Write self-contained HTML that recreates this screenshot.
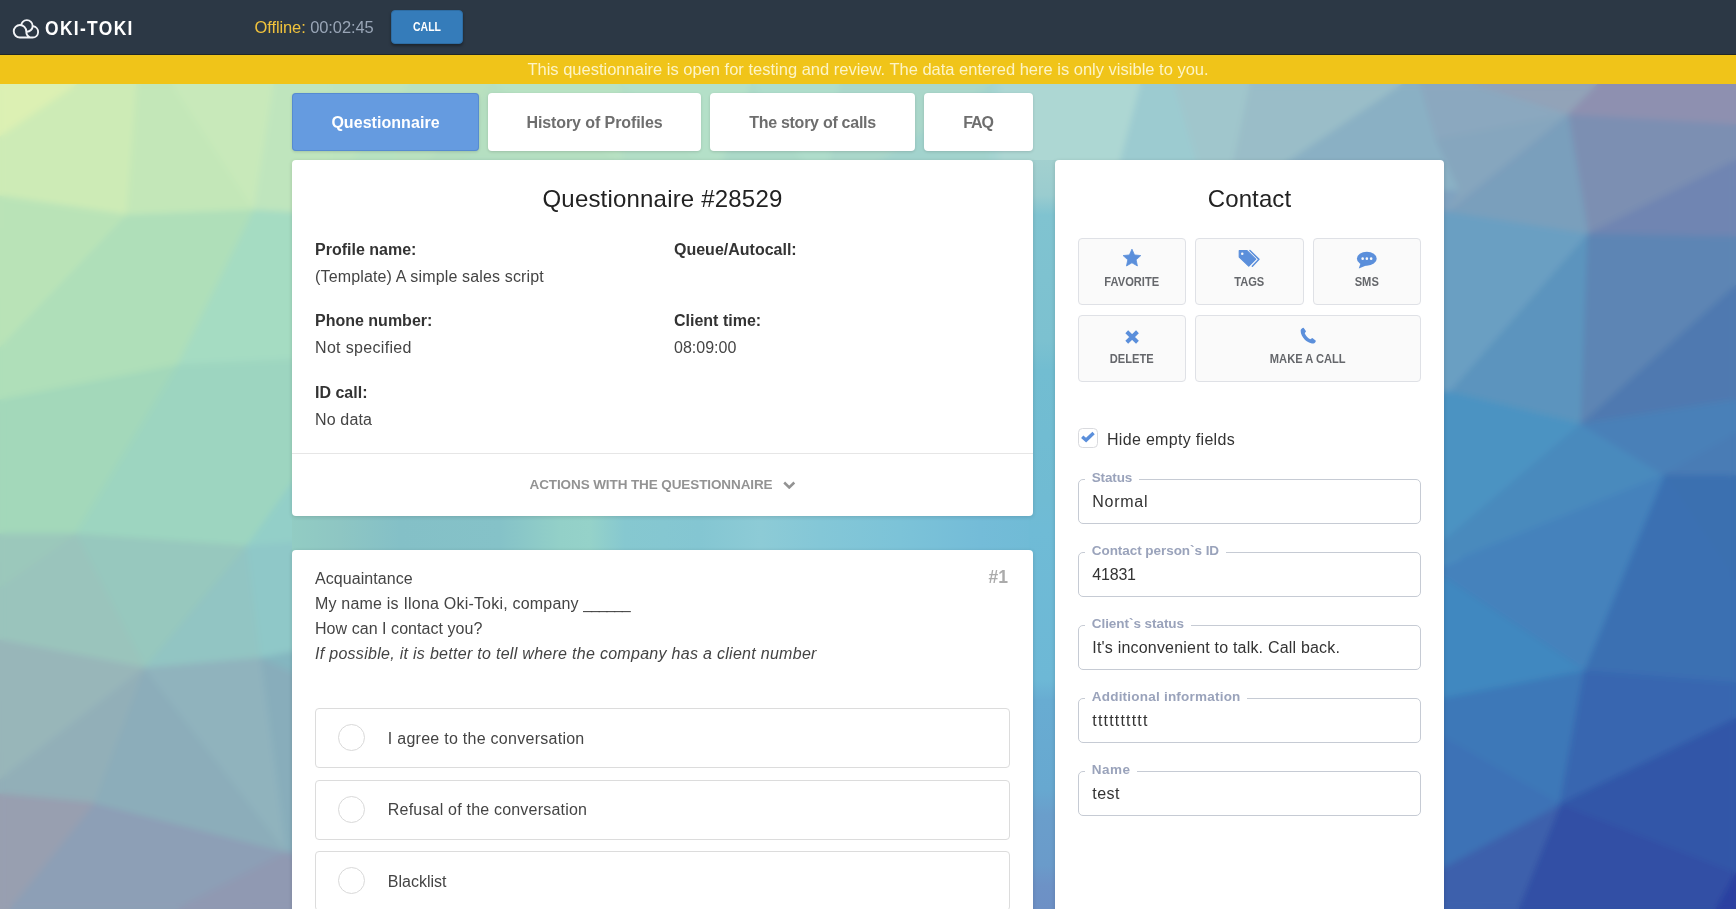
<!DOCTYPE html>
<html lang="en">
<head>
<meta charset="utf-8">
<title>Oki-Toki — Questionnaire #28529</title>
<style>
*{box-sizing:border-box;margin:0;padding:0}
html,body{width:1736px;height:909px;overflow:hidden}
body{font-family:"Liberation Sans",sans-serif;font-size:16px;color:#333;position:relative;background:#8fc5cc}
#bg{position:absolute;left:0;top:0;width:1736px;height:909px;z-index:0}
.abs{position:absolute}
#topbar,#notice,.tab,.card{will-change:transform}
#topbar{position:absolute;left:0;top:0;width:1736px;height:55px;background:#2c3845;z-index:2;box-shadow:inset 0 -1px 0 rgba(20,20,0,.45)}
#logo{position:absolute;left:10px;top:16px}
#brand{position:absolute;left:45px;top:16px;font-weight:bold;font-size:20px;line-height:24px;color:#fff;white-space:nowrap;letter-spacing:1.55px;transform:scaleX(.87);transform-origin:0 0}
#offline{position:absolute;left:254.5px;top:14.5px;font-size:16.5px;letter-spacing:-.1px;line-height:24px;white-space:nowrap;color:#99a5b6}
#offline b{font-weight:normal;color:#f0c23c}
#callbtn{position:absolute;left:391px;top:10px;width:72px;height:34px;background:#357cba;border:1px solid #2e6da4;border-radius:4px;color:#fff;font-weight:bold;font-size:12px;line-height:32px;text-align:center;box-shadow:0 2px 3px rgba(0,0,0,.35)}
#callbtn span{display:inline-block;transform:scaleX(.87)}
#notice{position:absolute;left:0;top:55px;width:1736px;height:29px;background:#f0c419;color:#fdf4c6;font-size:16.5px;line-height:29px;text-align:center;z-index:2;white-space:nowrap}
.tab{position:absolute;top:93px;height:58px;background:#fff;border-radius:4px;color:#6e6e6e;font-size:16px;font-weight:bold;line-height:60px;text-align:center;white-space:nowrap;box-shadow:0 1px 3px rgba(0,0,0,.14);z-index:1}
.tab.active{background:#659be0;color:#fff;box-shadow:inset 0 0 0 1px rgba(60,110,180,.35),0 1px 3px rgba(0,0,0,.14)}
.card{position:absolute;background:#fff;border-radius:4px;box-shadow:0 1px 4px rgba(0,0,0,.14);z-index:1}
h2{position:absolute;left:0;width:100%;text-align:center;font-weight:normal;font-size:24px;line-height:30px;color:#222;white-space:nowrap}
.lbl{position:absolute;font-weight:bold;font-size:16px;line-height:20px;color:#333;white-space:nowrap}
.val{position:absolute;font-size:16px;line-height:20px;color:#444;white-space:nowrap}

.hr{position:absolute;left:0;top:293px;width:100%;height:1px;background:#e6e6e6}
#actions{position:absolute;left:0;top:315px;width:100%;text-align:center;font-weight:bold;font-size:13.5px;line-height:20px;color:#939393;white-space:nowrap;letter-spacing:-.1px}
#actions svg{display:inline-block;vertical-align:0;margin-left:10.5px}
.q{position:absolute;left:23px;font-size:16px;line-height:25px;color:#444;white-space:nowrap}
#num{position:absolute;right:25px;top:16px;font-weight:bold;font-size:17.5px;line-height:22px;color:#ababab}
.opt{position:absolute;left:23.3px;width:694.5px;height:59.5px;border:1px solid #dcdcdc;border-radius:4px;background:#fff}
.opt i{position:absolute;left:22px;top:15px;width:27px;height:27px;border:1px solid #d9d9d9;border-radius:50%}
.opt span{position:absolute;left:71.5px;top:19.7px;font-size:16px;line-height:20px;color:#444;white-space:nowrap}
.cb{position:absolute;width:107.5px;height:66.3px;border:1px solid #dfe1e6;border-radius:4px;background:#fafafa;text-align:center}
.cb svg{position:absolute;left:0;top:0}
.cb span{position:absolute;left:0;width:100%;top:34.6px;font-size:12.5px;font-weight:bold;line-height:16px;color:#65676b;white-space:nowrap;transform:scaleX(.89)}
#chk{position:absolute;left:23.3px;top:268.3px;width:19.5px;height:19.4px;border:1px solid #d9dade;border-radius:4.5px;background:#fff}
#chk svg{position:absolute;left:0;top:0}
#chklbl{position:absolute;left:52px;top:270px;letter-spacing:.31px;font-size:16px;line-height:20px;color:#333;white-space:nowrap}
.fs{position:absolute;left:23.25px;width:342.5px;height:45px;border:1px solid #c6cbd4;border-radius:5px}
.fs b{position:absolute;left:6px;top:-10.8px;padding:0 6.5px;background:#fff;font-size:13.5px;line-height:18px;color:#9aa3bb;white-space:nowrap}
.fs span{position:absolute;left:13px;top:12px;font-size:16px;line-height:20px;color:#333;white-space:nowrap}
</style>
</head>
<body>
<svg id="bg" viewBox="0 0 1736 909" preserveAspectRatio="none">
<defs>
<linearGradient id="g1" x1="0" y1="0" x2="1" y2="1">
<stop offset="0" stop-color="#d6edb4"/><stop offset=".35" stop-color="#9fd6c4"/><stop offset=".65" stop-color="#69b2d0"/><stop offset="1" stop-color="#3050a8"/>
</linearGradient>
</defs>
<rect width="1736" height="909" fill="url(#g1)"/>
<!--BG--><filter id="bl" filterUnits="userSpaceOnUse" x="-50" y="0" width="1836" height="1000"><feGaussianBlur stdDeviation="3"/></filter><g id="bgp" stroke-width="1" stroke-linejoin="round"><polygon points="0,84 120,84 141,163" fill="#d1ecb7" stroke="#d1ecb7"/>
<polygon points="0,84 141,163 0,228" fill="#c8e7b5" stroke="#c8e7b5"/>
<polygon points="120,84 253,84 141,163" fill="#c9e8b9" stroke="#c9e8b9"/>
<polygon points="253,84 291,241 141,163" fill="#bee3bb" stroke="#bee3bb"/>
<polygon points="253,84 410,84 291,241" fill="#bde4be" stroke="#bde4be"/>
<polygon points="410,84 386,212 291,241" fill="#b7e2c0" stroke="#b7e2c0"/>
<polygon points="410,84 493,84 386,212" fill="#b9e1bf" stroke="#b9e1bf"/>
<polygon points="493,84 465,161 386,212" fill="#b5debf" stroke="#b5debf"/>
<polygon points="493,84 621,84 623,164" fill="#b8e2c3" stroke="#b8e2c3"/>
<polygon points="493,84 623,164 465,161" fill="#b5dfc1" stroke="#b5dfc1"/>
<polygon points="621,84 752,84 716,180" fill="#b4e0c8" stroke="#b4e0c8"/>
<polygon points="621,84 716,180 623,164" fill="#b2dec6" stroke="#b2dec6"/>
<polygon points="752,84 840,84 826,199" fill="#afddcb" stroke="#afddcb"/>
<polygon points="752,84 826,199 716,180" fill="#abd9c8" stroke="#abd9c8"/>
<polygon points="840,84 993,84 826,199" fill="#aad7ca" stroke="#aad7ca"/>
<polygon points="993,84 987,231 826,199" fill="#a2d3cd" stroke="#a2d3cd"/>
<polygon points="993,84 1128,84 987,231" fill="#a6d4d2" stroke="#a6d4d2"/>
<polygon points="1128,84 1118,214 987,231" fill="#9acdd1" stroke="#9acdd1"/>
<polygon points="1128,84 1266,84 1240,216" fill="#94c2cd" stroke="#94c2cd"/>
<polygon points="1128,84 1240,216 1118,214" fill="#90c3ce" stroke="#90c3ce"/>
<polygon points="1266,84 1328,84 1360,183" fill="#8fb6c6" stroke="#8fb6c6"/>
<polygon points="1266,84 1360,183 1240,216" fill="#88b6ca" stroke="#88b6ca"/>
<polygon points="1328,84 1470,84 1360,183" fill="#8baec3" stroke="#8baec3"/>
<polygon points="1470,84 1532,244 1360,183" fill="#7fa2c0" stroke="#7fa2c0"/>
<polygon points="1470,84 1575,84 1642,219" fill="#8299b7" stroke="#8299b7"/>
<polygon points="1470,84 1642,219 1532,244" fill="#7999b9" stroke="#7999b9"/>
<polygon points="1575,84 1736,84 1736,186" fill="#8391b2" stroke="#8391b2"/>
<polygon points="1575,84 1736,186 1642,219" fill="#7b94b5" stroke="#7b94b5"/>
<polygon points="0,228 141,163 0,297" fill="#bee4b8" stroke="#bee4b8"/>
<polygon points="141,163 105,283 0,297" fill="#b7e1b9" stroke="#b7e1b9"/>
<polygon points="141,163 291,241 105,283" fill="#b8e4be" stroke="#b8e4be"/>
<polygon points="291,241 272,311 105,283" fill="#aadcbf" stroke="#aadcbf"/>
<polygon points="291,241 386,212 403,310" fill="#a7d9c0" stroke="#a7d9c0"/>
<polygon points="291,241 403,310 272,311" fill="#a6dcc4" stroke="#a6dcc4"/>
<polygon points="386,212 465,161 537,349" fill="#a9dcc5" stroke="#a9dcc5"/>
<polygon points="386,212 537,349 403,310" fill="#a1d8c5" stroke="#a1d8c5"/>
<polygon points="465,161 623,164 575,295" fill="#acddc6" stroke="#acddc6"/>
<polygon points="465,161 575,295 537,349" fill="#a0d5c4" stroke="#a0d5c4"/>
<polygon points="623,164 716,180 781,317" fill="#a3d7c9" stroke="#a3d7c9"/>
<polygon points="623,164 781,317 575,295" fill="#9cd3c6" stroke="#9cd3c6"/>
<polygon points="716,180 826,199 781,317" fill="#9dd3c9" stroke="#9dd3c9"/>
<polygon points="826,199 911,311 781,317" fill="#92cecb" stroke="#92cecb"/>
<polygon points="826,199 987,231 954,331" fill="#93cece" stroke="#93cece"/>
<polygon points="826,199 954,331 911,311" fill="#8fcdcd" stroke="#8fcdcd"/>
<polygon points="987,231 1118,214 954,331" fill="#8ac8d0" stroke="#8ac8d0"/>
<polygon points="1118,214 1141,300 954,331" fill="#81c2d1" stroke="#81c2d1"/>
<polygon points="1118,214 1240,216 1141,300" fill="#82bdd0" stroke="#82bdd0"/>
<polygon points="1240,216 1203,306 1141,300" fill="#77b4cc" stroke="#77b4cc"/>
<polygon points="1240,216 1360,183 1405,342" fill="#72a8c5" stroke="#72a8c5"/>
<polygon points="1240,216 1405,342 1203,306" fill="#6ca9c9" stroke="#6ca9c9"/>
<polygon points="1360,183 1532,244 1454,298" fill="#729fc0" stroke="#729fc0"/>
<polygon points="1360,183 1454,298 1405,342" fill="#6c9fc1" stroke="#6c9fc1"/>
<polygon points="1532,244 1642,219 1576,282" fill="#6b91b8" stroke="#6b91b8"/>
<polygon points="1532,244 1576,282 1454,298" fill="#6a96bd" stroke="#6a96bd"/>
<polygon points="1642,219 1736,186 1576,282" fill="#6e8eb6" stroke="#6e8eb6"/>
<polygon points="1736,186 1736,345 1576,282" fill="#6487b5" stroke="#6487b5"/>
<polygon points="0,297 105,283 129,433" fill="#addebc" stroke="#addebc"/>
<polygon points="0,297 129,433 0,410" fill="#aadcbc" stroke="#aadcbc"/>
<polygon points="105,283 272,311 220,457" fill="#a6dbc1" stroke="#a6dbc1"/>
<polygon points="105,283 220,457 129,433" fill="#a4d9bf" stroke="#a4d9bf"/>
<polygon points="272,311 403,310 339,450" fill="#9ed6c3" stroke="#9ed6c3"/>
<polygon points="272,311 339,450 220,457" fill="#9dd5c3" stroke="#9dd5c3"/>
<polygon points="403,310 537,349 339,450" fill="#9ad3c4" stroke="#9ad3c4"/>
<polygon points="537,349 462,431 339,450" fill="#97d2c6" stroke="#97d2c6"/>
<polygon points="537,349 575,295 462,431" fill="#99d4c8" stroke="#99d4c8"/>
<polygon points="575,295 594,418 462,431" fill="#97d3c9" stroke="#97d3c9"/>
<polygon points="575,295 781,317 786,463" fill="#91cfcc" stroke="#91cfcc"/>
<polygon points="575,295 786,463 594,418" fill="#8fcdc8" stroke="#8fcdc8"/>
<polygon points="781,317 911,311 786,463" fill="#8bcdcf" stroke="#8bcdcf"/>
<polygon points="911,311 851,470 786,463" fill="#86c9d0" stroke="#86c9d0"/>
<polygon points="911,311 954,331 851,470" fill="#83c5ce" stroke="#83c5ce"/>
<polygon points="954,331 966,429 851,470" fill="#80c5d3" stroke="#80c5d3"/>
<polygon points="954,331 1141,300 966,429" fill="#7bc2d4" stroke="#7bc2d4"/>
<polygon points="1141,300 1148,450 966,429" fill="#6fb7d2" stroke="#6fb7d2"/>
<polygon points="1141,300 1203,306 1148,450" fill="#6eb2ce" stroke="#6eb2ce"/>
<polygon points="1203,306 1204,479 1148,450" fill="#66aed0" stroke="#66aed0"/>
<polygon points="1203,306 1405,342 1204,479" fill="#61a6ca" stroke="#61a6ca"/>
<polygon points="1405,342 1338,417 1204,479" fill="#599ec6" stroke="#599ec6"/>
<polygon points="1405,342 1454,298 1512,423" fill="#5e96bf" stroke="#5e96bf"/>
<polygon points="1405,342 1512,423 1338,417" fill="#5998c3" stroke="#5998c3"/>
<polygon points="1454,298 1576,282 1594,401" fill="#5f8eb9" stroke="#5f8eb9"/>
<polygon points="1454,298 1594,401 1512,423" fill="#5a90bd" stroke="#5a90bd"/>
<polygon points="1576,282 1736,345 1736,403" fill="#5982b5" stroke="#5982b5"/>
<polygon points="1576,282 1736,403 1594,401" fill="#5683b4" stroke="#5683b4"/>
<polygon points="0,410 129,433 101,564" fill="#9fd2be" stroke="#9fd2be"/>
<polygon points="0,410 101,564 0,562" fill="#9ac9ba" stroke="#9ac9ba"/>
<polygon points="129,433 220,457 237,551" fill="#99cfc1" stroke="#99cfc1"/>
<polygon points="129,433 237,551 101,564" fill="#98cdc1" stroke="#98cdc1"/>
<polygon points="220,457 339,450 237,551" fill="#97d0c4" stroke="#97d0c4"/>
<polygon points="339,450 413,554 237,551" fill="#94cfc8" stroke="#94cfc8"/>
<polygon points="339,450 462,431 503,587" fill="#94d0c9" stroke="#94d0c9"/>
<polygon points="339,450 503,587 413,554" fill="#8fcac5" stroke="#8fcac5"/>
<polygon points="462,431 594,418 592,526" fill="#92cec8" stroke="#92cec8"/>
<polygon points="462,431 592,526 503,587" fill="#8fcbc7" stroke="#8fcbc7"/>
<polygon points="594,418 786,463 592,526" fill="#8dcccb" stroke="#8dcccb"/>
<polygon points="786,463 780,582 592,526" fill="#89c8cd" stroke="#89c8cd"/>
<polygon points="786,463 851,470 780,582" fill="#85c7d0" stroke="#85c7d0"/>
<polygon points="851,470 846,529 780,582" fill="#83c5d0" stroke="#83c5d0"/>
<polygon points="851,470 966,429 1013,593" fill="#7cc2d5" stroke="#7cc2d5"/>
<polygon points="851,470 1013,593 846,529" fill="#7fc5d5" stroke="#7fc5d5"/>
<polygon points="966,429 1148,450 1089,594" fill="#6fb7d5" stroke="#6fb7d5"/>
<polygon points="966,429 1089,594 1013,593" fill="#73bbd6" stroke="#73bbd6"/>
<polygon points="1148,450 1204,479 1089,594" fill="#64abd0" stroke="#64abd0"/>
<polygon points="1204,479 1274,564 1089,594" fill="#5da2cc" stroke="#5da2cc"/>
<polygon points="1204,479 1338,417 1274,564" fill="#589eca" stroke="#589eca"/>
<polygon points="1338,417 1357,522 1274,564" fill="#5399c7" stroke="#5399c7"/>
<polygon points="1338,417 1512,423 1447,595" fill="#5094c4" stroke="#5094c4"/>
<polygon points="1338,417 1447,595 1357,522" fill="#4f94c4" stroke="#4f94c4"/>
<polygon points="1512,423 1594,401 1589,573" fill="#4c86bb" stroke="#4c86bb"/>
<polygon points="1512,423 1589,573 1447,595" fill="#4688be" stroke="#4688be"/>
<polygon points="1594,401 1736,403 1736,535" fill="#4a7ab3" stroke="#4a7ab3"/>
<polygon points="1594,401 1736,535 1589,573" fill="#437ab4" stroke="#437ab4"/>
<polygon points="0,562 101,564 0,701" fill="#97bfba" stroke="#97bfba"/>
<polygon points="101,564 133,656 0,701" fill="#97bdbd" stroke="#97bdbd"/>
<polygon points="101,564 237,551 133,656" fill="#92c1be" stroke="#92c1be"/>
<polygon points="237,551 219,692 133,656" fill="#90bbbe" stroke="#90bbbe"/>
<polygon points="237,551 413,554 334,650" fill="#8dc3c3" stroke="#8dc3c3"/>
<polygon points="237,551 334,650 219,692" fill="#8ebdc2" stroke="#8ebdc2"/>
<polygon points="413,554 503,587 334,650" fill="#8bc1c5" stroke="#8bc1c5"/>
<polygon points="503,587 501,703 334,650" fill="#86b8c3" stroke="#86b8c3"/>
<polygon points="503,587 592,526 630,655" fill="#89c2c9" stroke="#89c2c9"/>
<polygon points="503,587 630,655 501,703" fill="#86bbc9" stroke="#86bbc9"/>
<polygon points="592,526 780,582 781,648" fill="#84c1ce" stroke="#84c1ce"/>
<polygon points="592,526 781,648 630,655" fill="#82bbc8" stroke="#82bbc8"/>
<polygon points="780,582 846,529 825,654" fill="#7ebdce" stroke="#7ebdce"/>
<polygon points="780,582 825,654 781,648" fill="#7cbace" stroke="#7cbace"/>
<polygon points="846,529 1013,593 987,636" fill="#75b8d1" stroke="#75b8d1"/>
<polygon points="846,529 987,636 825,654" fill="#79bad1" stroke="#79bad1"/>
<polygon points="1013,593 1089,594 1087,662" fill="#6ab0d2" stroke="#6ab0d2"/>
<polygon points="1013,593 1087,662 987,636" fill="#6bafcf" stroke="#6bafcf"/>
<polygon points="1089,594 1274,564 1087,662" fill="#5fa1cb" stroke="#5fa1cb"/>
<polygon points="1274,564 1246,642 1087,662" fill="#5899c7" stroke="#5899c7"/>
<polygon points="1274,564 1357,522 1246,642" fill="#5094c5" stroke="#5094c5"/>
<polygon points="1357,522 1352,706 1246,642" fill="#4c8dc2" stroke="#4c8dc2"/>
<polygon points="1357,522 1447,595 1531,687" fill="#4589c0" stroke="#4589c0"/>
<polygon points="1357,522 1531,687 1352,706" fill="#4486be" stroke="#4486be"/>
<polygon points="1447,595 1589,573 1629,680" fill="#3f7dba" stroke="#3f7dba"/>
<polygon points="1447,595 1629,680 1531,687" fill="#3e7bba" stroke="#3e7bba"/>
<polygon points="1589,573 1736,535 1629,680" fill="#3c75b6" stroke="#3c75b6"/>
<polygon points="1736,535 1736,643 1629,680" fill="#396eb2" stroke="#396eb2"/>
<polygon points="0,701 133,656 0,752" fill="#94b2b8" stroke="#94b2b8"/>
<polygon points="133,656 81,826 0,752" fill="#95afb9" stroke="#95afb9"/>
<polygon points="133,656 219,692 81,826" fill="#91b1bc" stroke="#91b1bc"/>
<polygon points="219,692 266,830 81,826" fill="#8fa7b7" stroke="#8fa7b7"/>
<polygon points="219,692 334,650 329,803" fill="#89b0bf" stroke="#89b0bf"/>
<polygon points="219,692 329,803 266,830" fill="#8aa6b8" stroke="#8aa6b8"/>
<polygon points="334,650 501,703 329,803" fill="#86b0c2" stroke="#86b0c2"/>
<polygon points="501,703 494,811 329,803" fill="#83a6bd" stroke="#83a6bd"/>
<polygon points="501,703 630,655 604,834" fill="#7faec7" stroke="#7faec7"/>
<polygon points="501,703 604,834 494,811" fill="#80a5c0" stroke="#80a5c0"/>
<polygon points="630,655 781,648 706,795" fill="#7ab1cb" stroke="#7ab1cb"/>
<polygon points="630,655 706,795 604,834" fill="#7ba8c5" stroke="#7ba8c5"/>
<polygon points="781,648 825,654 706,795" fill="#75adc9" stroke="#75adc9"/>
<polygon points="825,654 889,825 706,795" fill="#74a6c8" stroke="#74a6c8"/>
<polygon points="825,654 987,636 889,825" fill="#6eaaca" stroke="#6eaaca"/>
<polygon points="987,636 1013,808 889,825" fill="#6ba3ca" stroke="#6ba3ca"/>
<polygon points="987,636 1087,662 1013,808" fill="#69add1" stroke="#69add1"/>
<polygon points="1087,662 1142,826 1013,808" fill="#659ecd" stroke="#659ecd"/>
<polygon points="1087,662 1246,642 1227,807" fill="#5694c6" stroke="#5694c6"/>
<polygon points="1087,662 1227,807 1142,826" fill="#5b91c6" stroke="#5b91c6"/>
<polygon points="1246,642 1352,706 1227,807" fill="#4d89c1" stroke="#4d89c1"/>
<polygon points="1352,706 1400,823 1227,807" fill="#477ab9" stroke="#477ab9"/>
<polygon points="1352,706 1531,687 1481,816" fill="#3e78b8" stroke="#3e78b8"/>
<polygon points="1352,706 1481,816 1400,823" fill="#4174b5" stroke="#4174b5"/>
<polygon points="1531,687 1629,680 1481,816" fill="#3b72b6" stroke="#3b72b6"/>
<polygon points="1629,680 1644,797 1481,816" fill="#3869b2" stroke="#3869b2"/>
<polygon points="1629,680 1736,643 1736,802" fill="#3466af" stroke="#3466af"/>
<polygon points="1629,680 1736,802 1644,797" fill="#3460ad" stroke="#3460ad"/>
<polygon points="0,752 81,826 0,909" fill="#99a7b7" stroke="#99a7b7"/>
<polygon points="81,826 113,909 0,909" fill="#98a0b5" stroke="#98a0b5"/>
<polygon points="81,826 266,830 255,909" fill="#8f9db3" stroke="#8f9db3"/>
<polygon points="81,826 255,909 113,909" fill="#959eb5" stroke="#959eb5"/>
<polygon points="266,830 329,803 382,909" fill="#8c9fb8" stroke="#8c9fb8"/>
<polygon points="266,830 382,909 255,909" fill="#8c9ab3" stroke="#8c9ab3"/>
<polygon points="329,803 494,811 459,909" fill="#869fba" stroke="#869fba"/>
<polygon points="329,803 459,909 382,909" fill="#889bb7" stroke="#889bb7"/>
<polygon points="494,811 604,834 459,909" fill="#819cba" stroke="#819cba"/>
<polygon points="604,834 632,909 459,909" fill="#819abd" stroke="#819abd"/>
<polygon points="604,834 706,795 632,909" fill="#7b9cbe" stroke="#7b9cbe"/>
<polygon points="706,795 788,909 632,909" fill="#7899c0" stroke="#7899c0"/>
<polygon points="706,795 889,825 788,909" fill="#749bc3" stroke="#749bc3"/>
<polygon points="889,825 902,909 788,909" fill="#6f94c1" stroke="#6f94c1"/>
<polygon points="889,825 1013,808 1012,909" fill="#6c98c8" stroke="#6c98c8"/>
<polygon points="889,825 1012,909 902,909" fill="#6c92c3" stroke="#6c92c3"/>
<polygon points="1013,808 1142,826 1012,909" fill="#6896ca" stroke="#6896ca"/>
<polygon points="1142,826 1106,909 1012,909" fill="#648cc6" stroke="#648cc6"/>
<polygon points="1142,826 1227,807 1106,909" fill="#5a85c0" stroke="#5a85c0"/>
<polygon points="1227,807 1261,909 1106,909" fill="#557cbc" stroke="#557cbc"/>
<polygon points="1227,807 1400,823 1261,909" fill="#4a74b8" stroke="#4a74b8"/>
<polygon points="1400,823 1371,909 1261,909" fill="#476eb6" stroke="#476eb6"/>
<polygon points="1400,823 1481,816 1371,909" fill="#416bb1" stroke="#416bb1"/>
<polygon points="1481,816 1483,909 1371,909" fill="#4067b1" stroke="#4067b1"/>
<polygon points="1481,816 1644,797 1483,909" fill="#3a62af" stroke="#3a62af"/>
<polygon points="1644,797 1642,909 1483,909" fill="#3758aa" stroke="#3758aa"/>
<polygon points="1644,797 1736,802 1736,909" fill="#3151a8" stroke="#3151a8"/>
<polygon points="1644,797 1736,909 1642,909" fill="#314ea7" stroke="#314ea7"/>
<polygon points="0,84 78,84 0,137" fill="#dcf0b3" stroke="#dcf0b3"/>
<polygon points="0,137 78,84 137,84 127,215 0,196" fill="#cdebb6" stroke="#cdebb6"/>
<polygon points="137,84 172,84 254,210 127,215" fill="#c3e7b8" stroke="#c3e7b8"/>
<polygon points="172,84 274,84 254,210" fill="#c8e9ba" stroke="#c8e9ba"/>
<polygon points="274,84 330,84 330,215 254,210" fill="#bfe5bd" stroke="#bfe5bd"/>
<polygon points="0,196 127,215 0,348" fill="#b9e3b7" stroke="#b9e3b7"/>
<polygon points="0,348 127,215 254,210 178,365 0,400" fill="#afdfb9" stroke="#afdfb9"/>
<polygon points="254,210 330,215 330,358 178,365" fill="#a5dcc2" stroke="#a5dcc2"/>
<polygon points="0,400 178,365 76,534 0,534" fill="#a3d8ba" stroke="#a3d8ba"/>
<polygon points="178,365 330,358 330,430 247,546 76,534" fill="#9dd5c0" stroke="#9dd5c0"/>
<polygon points="247,546 330,430 330,540" fill="#93cfc8" stroke="#93cfc8"/>
<polygon points="76,534 247,546 145,668" fill="#97c8be" stroke="#97c8be"/>
<polygon points="0,534 76,534 0,588" fill="#9bc8bb" stroke="#9bc8bb"/>
<polygon points="0,588 76,534 145,668 0,640" fill="#9ac4bc" stroke="#9ac4bc"/>
<polygon points="0,640 145,668 0,780" fill="#98b6b9" stroke="#98b6b9"/>
<polygon points="247,546 261,658 145,668" fill="#92c5c3" stroke="#92c5c3"/>
<polygon points="247,546 330,540 330,645 261,658" fill="#8fc8c8" stroke="#8fc8c8"/>
<polygon points="261,658 330,645 330,690" fill="#84b6c0" stroke="#84b6c0"/>
<polygon points="0,780 145,668 95,803 0,794" fill="#92afb8" stroke="#92afb8"/>
<polygon points="0,794 95,803 10,909 0,909" fill="#989fb0" stroke="#989fb0"/>
<polygon points="95,803 287,852 178,909 10,909" fill="#8d9fb6" stroke="#8d9fb6"/>
<polygon points="287,852 330,909 178,909" fill="#9099b2" stroke="#9099b2"/>
<polygon points="145,668 287,852 95,803" fill="#8cadba" stroke="#8cadba"/>
<polygon points="145,668 261,658 287,852" fill="#90b3bd" stroke="#90b3bd"/>
<polygon points="261,658 330,690 330,860 287,852" fill="#88adbb" stroke="#88adbb"/>
<polygon points="287,852 330,860 330,909" fill="#8c9ab4" stroke="#8c9ab4"/>
<polygon points="1000,84 1141,84 1113,190 1000,190" fill="#add7d3" stroke="#add7d3"/>
<polygon points="1141,84 1175,84 1206,190 1113,190" fill="#9ccbd0" stroke="#9ccbd0"/>
<polygon points="1175,84 1250,84 1228,190 1206,190" fill="#a0c6cc" stroke="#a0c6cc"/>
<polygon points="1250,84 1403,84 1246,190 1228,190" fill="#9abdc8" stroke="#9abdc8"/>
<polygon points="1403,84 1420,84 1460,190 1246,190" fill="#8ab0c4" stroke="#8ab0c4"/>
<polygon points="1470,84 1598,84 1568,115" fill="#92a3b8" stroke="#92a3b8"/>
<polygon points="1420,84 1470,84 1568,115 1436,140" fill="#8ba8bf" stroke="#8ba8bf"/>
<polygon points="1436,140 1568,115 1448,212 1460,190" fill="#86a6be" stroke="#86a6be"/>
<polygon points="1598,84 1736,84 1736,125 1568,115" fill="#8e90b0" stroke="#8e90b0"/>
<polygon points="1568,115 1736,125 1736,160 1588,234" fill="#7b8fb2" stroke="#7b8fb2"/>
<polygon points="1588,234 1736,160 1736,237" fill="#7085b2" stroke="#7085b2"/>
<polygon points="1448,212 1568,115 1588,234" fill="#7a9fbc" stroke="#7a9fbc"/>
<polygon points="1400,205 1448,212 1588,234 1450,392 1400,395" fill="#6b9fc2" stroke="#6b9fc2"/>
<polygon points="1450,392 1588,234 1581,424" fill="#5c94be" stroke="#5c94be"/>
<polygon points="1588,234 1736,237 1736,285 1581,424" fill="#5d85b4" stroke="#5d85b4"/>
<polygon points="1581,424 1736,285 1736,400" fill="#5079b0" stroke="#5079b0"/>
<polygon points="1400,392 1450,392 1581,424 1446,539 1400,545" fill="#4c93c2" stroke="#4c93c2"/>
<polygon points="1581,424 1664,475 1446,562 1400,565 1400,545 1446,539" fill="#4a8abd" stroke="#4a8abd"/>
<polygon points="1581,424 1736,400 1736,433 1664,475" fill="#4a80b8" stroke="#4a80b8"/>
<polygon points="1664,475 1736,433 1736,476" fill="#4a7cb5" stroke="#4a7cb5"/>
<polygon points="1664,475 1736,476 1736,582" fill="#3b6fb0" stroke="#3b6fb0"/>
<polygon points="1664,475 1736,582 1736,683 1584,671" fill="#3a6fb2" stroke="#3a6fb2"/>
<polygon points="1400,565 1446,565 1664,475 1584,671 1446,579" fill="#4482bc" stroke="#4482bc"/>
<polygon points="1400,575 1446,579 1584,671 1446,698 1400,700" fill="#3f88c0" stroke="#3f88c0"/>
<polygon points="1400,700 1446,698 1584,671 1560,804 1446,738 1400,740" fill="#3c78b8" stroke="#3c78b8"/>
<polygon points="1584,671 1736,683 1736,718 1560,804" fill="#3766b0" stroke="#3766b0"/>
<polygon points="1560,804 1736,718 1736,873" fill="#3157a8" stroke="#3157a8"/>
<polygon points="1560,804 1736,873 1716,909 1518,909" fill="#3050a5" stroke="#3050a5"/>
<polygon points="1736,873 1736,909 1716,909" fill="#2c40a0" stroke="#2c40a0"/>
<polygon points="1560,804 1518,909 1400,909 1400,870 1446,866" fill="#3c60ac" stroke="#3c60ac"/>
<polygon points="1560,804 1446,866 1400,870 1400,740 1446,738" fill="#3c72b6" stroke="#3c72b6"/></g><use href="#bgp" filter="url(#bl)"/><linearGradient id="gh" gradientUnits="userSpaceOnUse" x1="292" y1="0" x2="1033" y2="0"><stop offset="0.0000" stop-color="#92ccc3"/><stop offset="0.0648" stop-color="#8ec6c3"/><stop offset="0.1457" stop-color="#84c0c7"/><stop offset="0.2807" stop-color="#85c2c8"/><stop offset="0.3617" stop-color="#93d0c8"/><stop offset="0.4022" stop-color="#95d2c9"/><stop offset="0.4494" stop-color="#86c8d0"/><stop offset="0.5506" stop-color="#84c6d2"/><stop offset="0.6316" stop-color="#8dcbd6"/><stop offset="0.7126" stop-color="#84c7d7"/><stop offset="0.8205" stop-color="#7cc3d8"/><stop offset="0.9285" stop-color="#74bcd8"/><stop offset="1.0000" stop-color="#70bbd6"/></linearGradient><linearGradient id="gv" gradientUnits="userSpaceOnUse" x1="0" y1="160" x2="0" y2="909"><stop offset="0.0000" stop-color="#a2d0cf"/><stop offset="0.0467" stop-color="#9acccf"/><stop offset="0.0734" stop-color="#80c3d0"/><stop offset="0.2403" stop-color="#7cc1d0"/><stop offset="0.2804" stop-color="#72bdd1"/><stop offset="0.4539" stop-color="#70bbd3"/><stop offset="0.4940" stop-color="#6fbbd6"/><stop offset="0.6943" stop-color="#6db8d6"/><stop offset="0.7210" stop-color="#68acd2"/><stop offset="0.8411" stop-color="#67a8d0"/><stop offset="0.8745" stop-color="#6a9ecb"/><stop offset="0.9413" stop-color="#6a9bca"/><stop offset="0.9680" stop-color="#6d92c6"/><stop offset="1.0000" stop-color="#6d90c5"/></linearGradient><rect x="292" y="512" width="741" height="42" fill="url(#gh)"/><rect x="1029" y="160" width="30" height="749" fill="url(#gv)"/><!--/BG-->
</svg>

<div id="topbar">
<svg id="logo" width="32" height="26" viewBox="10 16 32 26"><g fill="none" stroke="#f2f4f7" stroke-width="1.9" stroke-linecap="round" stroke-linejoin="round"><circle cx="26.85" cy="25.9" r="5.8"/><circle cx="20" cy="31.3" r="6.3" fill="#2c3845" stroke="none"/><path d="M33.2 26.3 A5.65 5.65 0 0 1 32.6 37.55 H20 A6.25 6.25 0 1 1 26.25 31.3 Q26.3 35.6 29.8 37.4"/></g></svg>
<div id="brand">OKI-TOKI</div>
<div id="offline"><b>Offline:</b> 00:02:45</div>
<div id="callbtn"><span>CALL</span></div>
</div>
<div id="notice">This questionnaire is open for testing and review. The data entered here is only visible to you.</div>

<div class="tab active" style="left:292px;width:187px;letter-spacing:.05px">Questionnaire</div>
<div class="tab" style="left:488px;width:213px;letter-spacing:-.09px">History of Profiles</div>
<div class="tab" style="left:710px;width:205px;letter-spacing:-.27px">The story of calls</div>
<div class="tab" style="left:924px;width:109px;letter-spacing:-1.1px;text-indent:-1px">FAQ</div>

<div class="card" id="qcard" style="left:292px;top:160px;width:741px;height:356px">
<h2 style="top:24px;letter-spacing:.19px">Questionnaire #28529</h2>
<div class="lbl" style="left:23px;top:80px">Profile name:</div>
<div class="val" style="left:23px;top:107px;letter-spacing:.15px">(Template) A simple sales script</div>
<div class="lbl" style="left:382px;top:80px">Queue/Autocall:</div>
<div class="lbl" style="left:23px;top:151px">Phone number:</div>
<div class="val" style="left:23px;top:178px;letter-spacing:.33px">Not specified</div>
<div class="lbl" style="left:382px;top:151px">Client time:</div>
<div class="val" style="left:382px;top:178px">08:09:00</div>
<div class="lbl" style="left:23px;top:223px">ID call:</div>
<div class="val" style="left:23px;top:250px;letter-spacing:.15px">No data</div>
<div class="hr"></div>
<div id="actions">ACTIONS WITH THE QUESTIONNAIRE<svg width="12.5" height="8.5" viewBox="0 0 12.5 8.5"><path d="M1.2 1.5 L6.25 6.5 L11.3 1.5" fill="none" stroke="#939393" stroke-width="2.5"/></svg></div>
</div>

<div class="card" id="scard" style="left:292px;top:550px;width:741px;height:380px">
<div class="q" style="top:16px;letter-spacing:.07px">Acquaintance</div>
<div class="q" style="top:41px"><span id="mn" style="letter-spacing:.2px">My name is Ilona Oki-Toki, company</span> <span id="us" style="letter-spacing:-1.2px">______</span></div>
<div class="q" style="top:66px;letter-spacing:.05px">How can I contact you?</div>
<div class="q" style="top:91px;letter-spacing:.29px"><em>If possible, it is better to tell where the company has a client number</em></div>
<div id="num">#1</div>
<div class="opt" style="top:158.2px"><i></i><span style="letter-spacing:.27px">I agree to the conversation</span></div>
<div class="opt" style="top:229.5px;height:60.3px"><i></i><span style="letter-spacing:.2px">Refusal of the conversation</span></div>
<div class="opt" style="top:301.2px"><i></i><span>Blacklist</span></div>
</div>

<div class="card" id="ccard" style="left:1055px;top:160px;width:389px;height:780px">
<h2 style="top:24px;letter-spacing:.1px">Contact</h2>
<div class="cb" style="left:23.25px;top:78.25px"><svg width="110" height="40" viewBox="0 0 110 40"><path d="M52.95 10.15 L55.52 15.91 L61.79 16.58 L57.11 20.80 L58.42 26.97 L52.95 23.82 L47.48 26.97 L48.79 20.80 L44.11 16.58 L50.38 15.91Z" fill="#5b8fdb" stroke="#5b8fdb" stroke-width=".8" stroke-linejoin="round"/></svg><span>FAVORITE</span></div>
<div class="cb" style="left:140.25px;top:78.25px;width:108.5px"><svg width="110" height="40" viewBox="0 0 110 40"><path d="M43.25 11.65 L51.05 11.65 L59.75 20.15 L52.75 27.15 L43.25 17.95 Z" fill="#5b8fdb" stroke="#5b8fdb" stroke-width="1.2" stroke-linejoin="round"/><path d="M53.95 11.55 L62.95 20.35 L56.35 27.25" fill="none" stroke="#5b8fdb" stroke-width="1.5" stroke-linejoin="round" stroke-linecap="round"/><circle cx="46.25" cy="14.65" r="1.25" fill="#fafafa"/></svg><span>TAGS</span></div>
<div class="cb" style="left:258.25px;top:78.25px"><svg width="110" height="40" viewBox="0 0 110 40"><ellipse cx="52.80" cy="19.70" rx="9.9" ry="6.95" fill="#5b8fdb"/><path d="M46.75 23.75 L44.75 29.55 L52.75 26.25 Z" fill="#5b8fdb"/><circle cx="48.65" cy="19.65" r="1.3" fill="#fafafa"/><circle cx="52.85" cy="19.65" r="1.3" fill="#fafafa"/><circle cx="57.15" cy="19.65" r="1.3" fill="#fafafa"/></svg><span>SMS</span></div>
<div class="cb" style="left:23.25px;top:154.5px;height:67px"><svg width="110" height="40" viewBox="0 0 110 40"><path d="M47.75 15.80 L58.45 26.20 M58.45 15.80 L47.75 26.20" stroke="#5b8fdb" stroke-width="4" fill="none"/></svg><span style="top:35.6px">DELETE</span></div>
<div class="cb" style="left:140.25px;top:154.5px;width:225.5px;height:67px"><svg width="226" height="40" viewBox="0 0 226 40"><path d="M107.55 11.80 C106.25 12.10, 104.75 13.10, 104.65 14.50 C104.45 21.00, 111.25 27.50, 117.35 27.50 C118.75 27.40, 119.75 26.10, 119.85 24.80 L116.35 21.90 L114.25 23.30 C112.05 22.30, 109.55 19.70, 108.75 17.30 L110.05 15.30 Z" fill="#5b8fdb"/></svg><span style="top:35.6px">MAKE A CALL</span></div>
<div id="chk"><svg width="18" height="18" viewBox="0 0 18 18"><path d="M3.2 7.7 L7.1 11.1 L14.6 4.1" fill="none" stroke="#5b8fdb" stroke-width="3.4"/></svg></div>
<div id="chklbl">Hide empty fields</div>
<div class="fs" style="top:319px"><b style="letter-spacing:-.15px">Status</b><span style="letter-spacing:.75px">Normal</span></div>
<div class="fs" style="top:392px"><b style="letter-spacing:-.05px">Contact person`s ID</b><span style="letter-spacing:-.19px">41831</span></div>
<div class="fs" style="top:465px"><b style="letter-spacing:-.05px">Client`s status</b><span style="letter-spacing:.2px">It's inconvenient to talk. Call back.</span></div>
<div class="fs" style="top:538px"><b style="letter-spacing:.22px">Additional information</b><span style="letter-spacing:1.18px">tttttttttt</span></div>
<div class="fs" style="top:611.2px"><b style="letter-spacing:.5px">Name</b><span style="letter-spacing:.43px">test</span></div>
</div>
</body>
</html>
